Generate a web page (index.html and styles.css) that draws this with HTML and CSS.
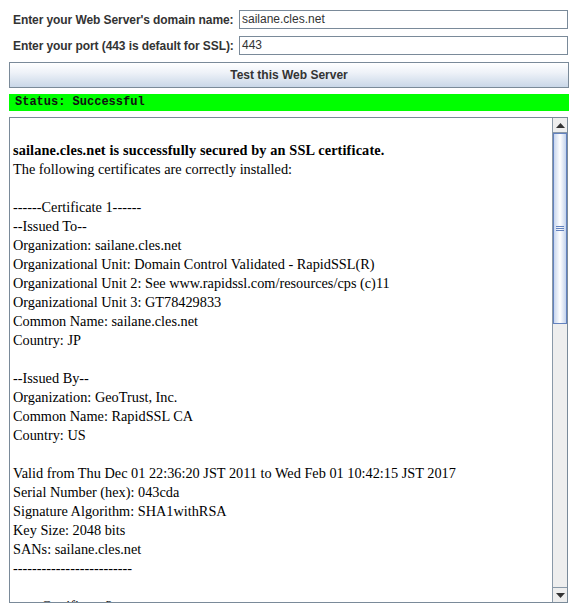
FILE: index.html
```html
<!DOCTYPE html>
<html>
<head>
<meta charset="utf-8">
<link rel="stylesheet" href="styles.css">
</head>
<body>
<div class="app">
  <div class="row">
    <label class="lbl">Enter your Web Server's domain name:</label>
    <div class="field">sailane.cles.net</div>
  </div>
  <div class="row">
    <label class="lbl">Enter your port (443 is default for SSL):</label>
    <div class="field">443</div>
  </div>
  <div class="btn">Test this Web Server</div>
  <div class="status">Status: Successful</div>
  <div class="output">
    <div class="content">
      <div class="line">&nbsp;</div>
      <div class="line"><b class="headline">sailane.cles.net is successfully secured by an SSL certificate.</b></div>
      <div class="line">The following certificates are correctly installed:</div>
      <div class="line">&nbsp;</div>
      <div class="line">------Certificate 1------</div>
      <div class="line">--Issued To--</div>
      <div class="line">Organization: sailane.cles.net</div>
      <div class="line">Organizational Unit: Domain Control Validated - RapidSSL(R)</div>
      <div class="line">Organizational Unit 2: See www.rapidssl.com/resources/cps (c)11</div>
      <div class="line">Organizational Unit 3: GT78429833</div>
      <div class="line">Common Name: sailane.cles.net</div>
      <div class="line">Country: JP</div>
      <div class="line">&nbsp;</div>
      <div class="line">--Issued By--</div>
      <div class="line">Organization: GeoTrust, Inc.</div>
      <div class="line">Common Name: RapidSSL CA</div>
      <div class="line">Country: US</div>
      <div class="line">&nbsp;</div>
      <div class="line">Valid from Thu Dec 01 22:36:20 JST 2011 to Wed Feb 01 10:42:15 JST 2017</div>
      <div class="line">Serial Number (hex): 043cda</div>
      <div class="line">Signature Algorithm: SHA1withRSA</div>
      <div class="line">Key Size: 2048 bits</div>
      <div class="line">SANs: sailane.cles.net</div>
      <div class="line">-------------------------</div>
      <div class="line">&nbsp;</div>
      <div class="line">------Certificate 2------</div>
    </div>
    <div class="scrollbar">
      <div class="arrow up"><svg width="9" height="5" viewBox="0 0 9 5"><path d="M0 5 L4.5 0 L9 5 Z" fill="#333"/></svg></div>
      <div class="thumb"><div class="grip"></div><div class="grip"></div><div class="grip"></div></div>
      <div class="track"></div>
      <div class="arrow down"><svg width="9" height="5" viewBox="0 0 9 5"><path d="M0 0 L4.5 5 L9 0 Z" fill="#333"/></svg></div>
    </div>
  </div>
</div>
</body>
</html>
```
FILE: styles.css
```css
html, body {
  margin: 0;
  padding: 0;
  background: #ffffff;
}
.app {
  width: 560px;
  padding: 10px 0 0 9px;
  display: flex;
  flex-direction: column;
}
.row {
  display: flex;
  align-items: center;
  height: 19px;
  margin-bottom: 7px;
}
.lbl {
  box-sizing: border-box;
  width: 230px;
  padding-left: 4px;
  font: bold 12px "Liberation Sans", Arial, sans-serif;
  letter-spacing: -0.08px;
  color: #333333;
  white-space: nowrap;
}
.field {
  box-sizing: border-box;
  width: 329px;
  height: 19px;
  border: 1px solid #7a8a99;
  padding: 0 2px;
  font: 12px/17px "Liberation Sans", Arial, sans-serif;
  color: #333333;
}
.btn {
  box-sizing: border-box;
  width: 560px;
  height: 26px;
  border: 1px solid #7a8a99;
  background: linear-gradient(#ffffff 0%, #eef2f8 40%, #c9d7e8 100%);
  font: bold 12px/24px "Liberation Sans", Arial, sans-serif;
  color: #333333;
  text-align: center;
}
.status {
  margin-top: 6px;
  width: 560px;
  height: 17px;
  background: #00ff00;
  font: bold 12px/17px "Liberation Mono", "DejaVu Sans Mono", monospace;
  color: #111;
  padding-left: 6px;
  box-sizing: border-box;
}
.output {
  margin-top: 6px;
  box-sizing: border-box;
  width: 559px;
  height: 486px;
  border: 1px solid #7a8a99;
  display: flex;
  overflow: hidden;
}
.content {
  flex: 1;
  padding: 4px 0 0 3px;
  overflow: hidden;
  font: 14.3px/19px "Liberation Serif", "Times New Roman", serif;
  color: #000;
  white-space: nowrap;
}
.headline {
  letter-spacing: 0.14px;
}
.scrollbar {
  width: 15px;
  display: flex;
  flex-direction: column;
  background: #eeeeee;
  box-sizing: border-box;
  border-left: 1px solid #8a99a8;
}
.arrow {
  height: 15px;
  box-sizing: border-box;
  background: #eeeeee;
  display: flex;
  align-items: center;
  justify-content: center;
}
.arrow.up { border-bottom: 1px solid #8a99a8; }
.arrow.down { border-top: 1px solid #8a99a8; }
.thumb {
  height: 191px;
  box-sizing: border-box;
  border: 1px solid #6382bf;
  background: linear-gradient(90deg, #c8d6ee 0%, #ffffff 50%, #c4d3ec 100%);
  display: flex;
  flex-direction: column;
  align-items: center;
  justify-content: center;
  gap: 1px;
}
.grip {
  width: 8px;
  height: 1px;
  background: #6382bf;
}
.track {
  flex: 1;
}
```
